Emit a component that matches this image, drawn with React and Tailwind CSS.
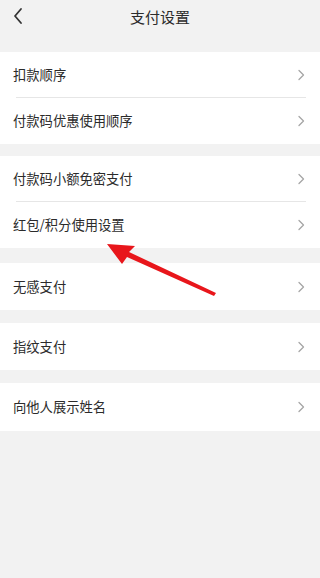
import React from "react";

function Chevron() {
  return (
    <svg width="8" height="12" viewBox="0 0 8 12" className="shrink-0">
      <path d="M2 1.5 L6.5 6 L2 10.5" fill="none" stroke="#a6a6a6" strokeWidth="1.3" strokeLinecap="round" strokeLinejoin="round" />
    </svg>
  );
}

function Row({ label, divider, h = "h-[46px]" }) {
  return (
    <div className={`relative flex items-center justify-between pl-[13px] pr-[15px] ${h}`}>
      <span className="text-[13.3px] text-[#2b2b2b]">{label}</span>
      <Chevron />
      {divider && <div className="absolute bottom-0 left-[16px] right-[14px] h-px bg-[#e6e6e6]" />}
    </div>
  );
}

export default function App() {
  return (
    <div
      className="relative w-full h-[578px] bg-[#f2f2f2] overflow-hidden"
      style={{ fontFamily: '"Noto Sans CJK SC", "Noto Sans", sans-serif' }}
    >
      <div className="relative h-[34px] flex items-center justify-center">
        <svg width="12" height="18" viewBox="0 0 12 18" className="absolute left-[12px] top-[7px]">
          <path d="M9 2 L3 9 L9 16" fill="none" stroke="#333333" strokeWidth="1.8" strokeLinecap="round" strokeLinejoin="round" />
        </svg>
        <span className="text-[15px] text-[#2b2b2b]">支付设置</span>
      </div>

      <div className="mt-[18px] bg-white">
        <Row label="扣款顺序" divider />
        <Row label="付款码优惠使用顺序" />
      </div>

      <div className="mt-[12px] bg-white">
        <Row label="付款码小额免密支付" divider />
        <Row label="红包/积分使用设置" />
      </div>

      <div className="mt-[15px] bg-white">
        <Row label="无感支付" h="h-[47px]" />
      </div>

      <div className="mt-[13px] bg-white">
        <Row label="指纹支付" h="h-[47px]" />
      </div>

      <div className="mt-[13px] bg-white">
        <Row label="向他人展示姓名" h="h-[48px]" />
      </div>

      <svg className="absolute left-0 top-0 pointer-events-none" width="302" height="578" viewBox="0 0 302 578">
        <polygon
          points="107,244 135,246 129,252 216,293 214,296 127,257 122,264"
          fill="#e8161b"
        />
      </svg>
    </div>
  );
}
